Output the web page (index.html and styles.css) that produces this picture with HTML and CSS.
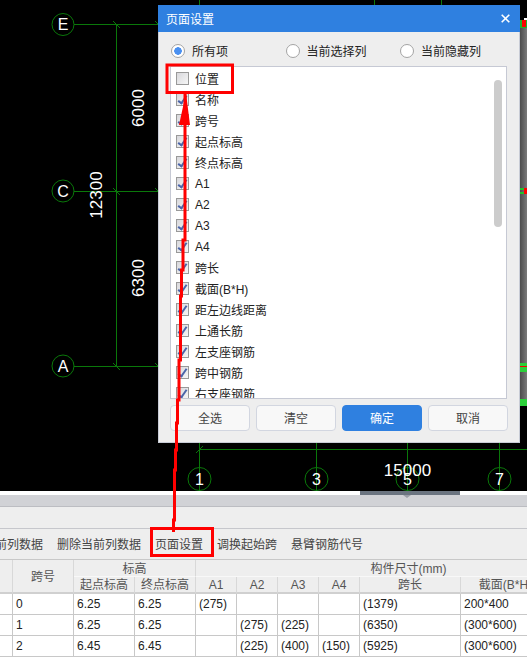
FILE: index.html
```html
<!DOCTYPE html>
<html lang="zh-CN">

<head>
    <meta charset="UTF-8">
    <title>页面设置</title>
    <link rel="stylesheet" href="styles.css">
</head>

<body>
    <div class="screen">
        <!-- CAD drawing -->
        <svg class="drawing" width="527" height="491" viewBox="0 0 527 491">
            <defs>
                <linearGradient id="shade" x1="0" x2="1" y1="0" y2="0">
                    <stop offset="0" stop-color="#4c4c4c"></stop>
                    <stop offset="1" stop-color="#7a7a7a"></stop>
                </linearGradient>
            </defs>
            <rect width="527" height="491" fill="#000"></rect>
            <g class="axis">
                <path d="M74 24.5H160M74 191.5H160M74 366.5H160M116.5 24V367"></path>
                <path d="M113 21l7 7M155 21l4 4M113 188l7 7M155 188l4 4M113 363l7 7M155 363l4 4"></path>
                <path d="M199.5 0V6M374.5 0V6M441.5 0V6"></path>
                <path d="M199 449.5H527M199.5 442V491M316.5 442V491M407.5 442V491M499.5 442V491M196 453l7 -7"></path>
                <circle cx="63" cy="24.5" r="11"></circle>
                <circle cx="63" cy="191" r="11"></circle>
                <circle cx="63" cy="366" r="11"></circle>
                <circle cx="199.5" cy="479" r="11.5"></circle>
                <circle cx="316.5" cy="479" r="11.5"></circle>
                <circle cx="407.5" cy="479" r="11.5"></circle>
                <circle cx="499.5" cy="479" r="11.5"></circle>
            </g>
            <g class="dim">
                <text x="63" y="30">E</text>
                <text x="63" y="197">C</text>
                <text x="63" y="372">A</text>
                <text x="199.5" y="485">1</text>
                <text x="316.5" y="485">3</text>
                <text x="407.5" y="485">5</text>
                <text x="499.5" y="485">7</text>
                <text class="big" x="407.5" y="476">15000</text>
                <text class="big" transform="translate(143.5 108) rotate(-90)">6000</text>
                <text class="big" transform="translate(102 195) rotate(-90)">12300</text>
                <text class="big" transform="translate(144 278) rotate(-90)">6300</text>
            </g>
            <rect x="520" y="28" width="7" height="378" fill="url(#shade)"></rect>
            <rect x="524" y="18" width="3" height="2" fill="#fff"></rect>
            <rect x="520" y="20" width="7" height="8" fill="#22b02c"></rect>
            <rect x="522" y="20" width="4" height="7" fill="#f00"></rect>
            <rect x="520" y="188" width="4" height="2" fill="#22c02c"></rect>
            <rect x="520" y="192" width="4" height="2" fill="#22c02c"></rect>
            <rect x="524" y="188" width="3" height="6" fill="#f00"></rect>
            <rect x="520" y="363" width="7" height="9" fill="#2bd03a"></rect>
            <rect x="520" y="366" width="7" height="1" fill="#f00"></rect>
            <rect x="520" y="399" width="7" height="7" fill="#2bd03a"></rect>
        </svg>

        <!-- Bottom panel -->
        <div class="hscroll"><div class="hscroll-thumb"></div></div>
        <div class="tabbar"></div>
        <div class="band"></div>
        <div class="toolbar">
            <span>插入当前列数据</span>
            <span>删除当前列数据</span>
            <span>页面设置</span>
            <span>调换起始跨</span>
            <span>悬臂钢筋代号</span>
        </div>
        <table class="grid">
            <colgroup>
                <col class="c-edge">
                <col class="c-wide">
                <col class="c-wide">
                <col class="c-wide">
                <col class="c-a">
                <col class="c-a">
                <col class="c-a">
                <col class="c-a">
                <col class="c-span">
                <col class="c-section">
                <col class="c-rest">
            </colgroup>
            <thead>
                <tr class="head-top">
                    <th rowspan="2"></th>
                    <th rowspan="2">跨号</th>
                    <th colspan="2">标高</th>
                    <th colspan="7">构件尺寸(mm)</th>
                </tr>
                <tr class="head-sub">
                    <th>起点标高</th>
                    <th>终点标高</th>
                    <th>A1</th>
                    <th>A2</th>
                    <th>A3</th>
                    <th>A4</th>
                    <th>跨长</th>
                    <th>截面(B*H)</th>
                    <th></th>
                </tr>
            </thead>
            <tbody>
                <tr>
                    <td></td><td>0</td><td>6.25</td><td>6.25</td><td>(275)</td><td></td><td></td><td></td><td>(1379)</td><td>200*400</td><td></td>
                </tr>
                <tr>
                    <td></td><td>1</td><td>6.25</td><td>6.25</td><td></td><td>(275)</td><td>(225)</td><td></td><td>(6350)</td><td>(300*600)</td><td></td>
                </tr>
                <tr>
                    <td></td><td>2</td><td>6.45</td><td>6.45</td><td></td><td>(225)</td><td>(400)</td><td>(150)</td><td>(5925)</td><td>(300*600)</td><td></td>
                </tr>
            </tbody>
        </table>

        <!-- Page settings dialog -->
        <div class="dialog">
            <div class="dialog-title">
                <span>页面设置</span>
                <svg width="9" height="9" viewBox="0 0 9 9"><path d="M.7.7l7.6 7.6M8.3.7L.7 8.3"></path></svg>
            </div>
            <div class="radios">
                <label class="radio-item"><span class="radio on"></span>所有项</label>
                <label class="radio-item"><span class="radio"></span>当前选择列</label>
                <label class="radio-item"><span class="radio"></span>当前隐藏列</label>
            </div>
            <div class="list">
                <div class="list-row"><span class="check"></span>位置</div>
                <div class="list-row"><span class="check on"></span>名称</div>
                <div class="list-row"><span class="check on"></span>跨号</div>
                <div class="list-row"><span class="check on"></span>起点标高</div>
                <div class="list-row"><span class="check on"></span>终点标高</div>
                <div class="list-row"><span class="check on"></span>A1</div>
                <div class="list-row"><span class="check on"></span>A2</div>
                <div class="list-row"><span class="check on"></span>A3</div>
                <div class="list-row"><span class="check on"></span>A4</div>
                <div class="list-row"><span class="check on"></span>跨长</div>
                <div class="list-row"><span class="check on"></span>截面(B*H)</div>
                <div class="list-row"><span class="check on"></span>距左边线距离</div>
                <div class="list-row"><span class="check on"></span>上通长筋</div>
                <div class="list-row"><span class="check on"></span>左支座钢筋</div>
                <div class="list-row"><span class="check on"></span>跨中钢筋</div>
                <div class="list-row"><span class="check on"></span>右支座钢筋</div>
                <div class="list-scroll"></div>
            </div>
            <div class="buttons">
                <button class="btn">全选</button>
                <button class="btn">清空</button>
                <button class="btn primary">确定</button>
                <button class="btn">取消</button>
            </div>
        </div>

        <!-- Red annotation drawn over the screenshot -->
        <svg class="markup" width="527" height="668" viewBox="0 0 527 668">
            <rect x="167" y="65" width="65.5" height="27.5"></rect>
            <rect x="151.5" y="528.5" width="61" height="27"></rect>
            <path d="M185 94V240H183V270H181.500V296H180.500V360H179V400H177.500V423H176.500V450H175.500V470H174.500V520H173.500V532"></path>
            <polygon points="186,93 190,125 179,125"></polygon>
        </svg>
    </div>
</body>

</html>
```

FILE: styles.css
```css
body {
    margin: 0;
    font-family: "Liberation Sans", "Noto Sans CJK SC", sans-serif;
    font-size: 12px;
    color: #222;
}

.screen {
    position: relative;
    width: 527px;
    height: 668px;
    overflow: hidden;
    background-color: #fff;
}

.drawing {
    display: block;
}

.axis path,
.axis circle {
    fill: none;
    stroke: #0a780a;
    stroke-width: 1;
}

.dim text {
    fill: #fff;
    font-size: 16px;
    text-anchor: middle;
}

.dim .big {
    font-size: 17px;
}

.hscroll {
    height: 4px;
    background-color: #fff;
    padding-left: 360px;
}

.hscroll-thumb {
    position: relative;
    width: 100px;
    height: 4px;
    background-color: #6b7480;
}

.hscroll-thumb::after {
    content: "";
    position: absolute;
    left: 43px;
    top: 4px;
    border-left: 4px solid transparent;
    border-right: 4px solid transparent;
    border-top: 3px solid #9a9ea6;
}

.tabbar {
    height: 11px;
    background-color: #d1d2d6;
    border-bottom: 1px solid #bcbdc2;
}

.band {
    height: 21px;
    background-color: #eee;
    border-bottom: 1px solid #c6c7cc;
}

.toolbar {
    display: flex;
    align-items: center;
    gap: 14px;
    box-sizing: border-box;
    height: 30px;
    margin-left: -41px;
    padding-bottom: 2px;
    background-color: #eee;
    color: #444;
    white-space: nowrap;
}

.grid {
    table-layout: fixed;
    width: 622px;
    border-collapse: separate;
    border-spacing: 0;
    border-top: 1px solid #c8c8c8;
}

.c-edge {
    width: 13px;
}

.c-wide {
    width: 61px;
}

.c-a {
    width: 41px;
}

.c-span {
    width: 101px;
}

.c-section {
    width: 90px;
}

.c-rest {
    width: 71px;
}

.grid th {
    box-sizing: border-box;
    padding: 1px 0 0;
    background-color: #eee;
    border-right: 1px solid #d8d8d8;
    border-bottom: 1px solid #f8f8f8;
    font-weight: normal;
    color: #555;
    text-align: center;
    line-height: 14px;
}

.head-top th {
    height: 17px;
}

.head-sub th {
    height: 17px;
    border-bottom: 2px solid #d0d0d0;
}

.grid th[rowspan] {
    border-bottom: 2px solid #d0d0d0;
}

.grid td {
    box-sizing: border-box;
    height: 21px;
    padding: 0 0 0 3px;
    border-right: 1px solid #c8c8c8;
    border-bottom: 1px solid #c8c8c8;
    color: #222;
    white-space: nowrap;
    overflow: hidden;
}

.dialog {
    position: absolute;
    left: 158px;
    top: 5px;
    box-sizing: border-box;
    width: 362px;
    height: 438px;
    background-color: #eee;
    border-right: 1px solid #c8ccd6;
    border-bottom: 1px solid #c8ccd6;
    border-left: 1px solid #c8ccd6;
}

.dialog-title {
    display: flex;
    align-items: center;
    justify-content: space-between;
    box-sizing: border-box;
    height: 27px;
    margin: 0 -1px;
    padding: 0 10px 1px 8px;
    background-color: #2f80e0;
    color: #fff;
}

.dialog-title path {
    fill: none;
    stroke: #fff;
    stroke-width: 1.6;
}

.radios {
    display: flex;
    align-items: center;
    box-sizing: border-box;
    height: 34px;
    padding: 3px 0 0 12px;
}

.radio-item {
    display: flex;
    align-items: center;
    gap: 7px;
    width: 114.500px;
}

.radio {
    box-sizing: border-box;
    width: 14px;
    height: 14px;
    border: 1px solid #a4a4a4;
    border-radius: 50%;
    background-color: #fff;
}

.radio.on {
    background: radial-gradient(circle, #4a90f0 0, #4a90f0 3.5px, #fff 4px);
}

.list {
    position: relative;
    box-sizing: border-box;
    height: 333px;
    margin: 0 12px 0 11px;
    padding-top: 1px;
    overflow: hidden;
    background-color: #fff;
    border: 1px solid #c6c9d4;
}

.list-row {
    display: flex;
    align-items: center;
    gap: 6px;
    height: 21px;
    padding-left: 5px;
    white-space: nowrap;
}

.check {
    position: relative;
    box-sizing: border-box;
    width: 13px;
    height: 13px;
    border: 1px solid #999;
    background: linear-gradient(135deg, #d8d8dc, #f6f6f6);
}

.check.on::after {
    content: "";
    position: absolute;
    left: 3px;
    top: 0;
    width: 3px;
    height: 8px;
    border-right: 2px solid #4a64a8;
    border-bottom: 2px solid #4a64a8;
    transform: rotate(35deg);
}

.list-scroll {
    position: absolute;
    left: 323px;
    top: 13px;
    width: 8px;
    height: 147px;
    border-radius: 4px;
    background-color: #ccc;
}

.buttons {
    display: flex;
    gap: 6px;
    margin: 6px 0 0 11px;
}

.btn {
    width: 80px;
    height: 26px;
    padding: 0 0 1px;
    background-color: #f8f8f8;
    border: 1px solid #d2d6e0;
    border-radius: 4px;
    font: inherit;
    color: #444;
}

.btn.primary {
    background-color: #2f80e0;
    border-color: #2f80e0;
    color: #fff;
}

.markup {
    position: absolute;
    left: 0;
    top: 0;
    pointer-events: none;
}

.markup rect {
    fill: none;
    stroke: #f00;
    stroke-width: 3;
}

.markup path {
    fill: none;
    stroke: #f00;
    stroke-width: 3;
}

.markup polygon {
    fill: #f00;
}
```
